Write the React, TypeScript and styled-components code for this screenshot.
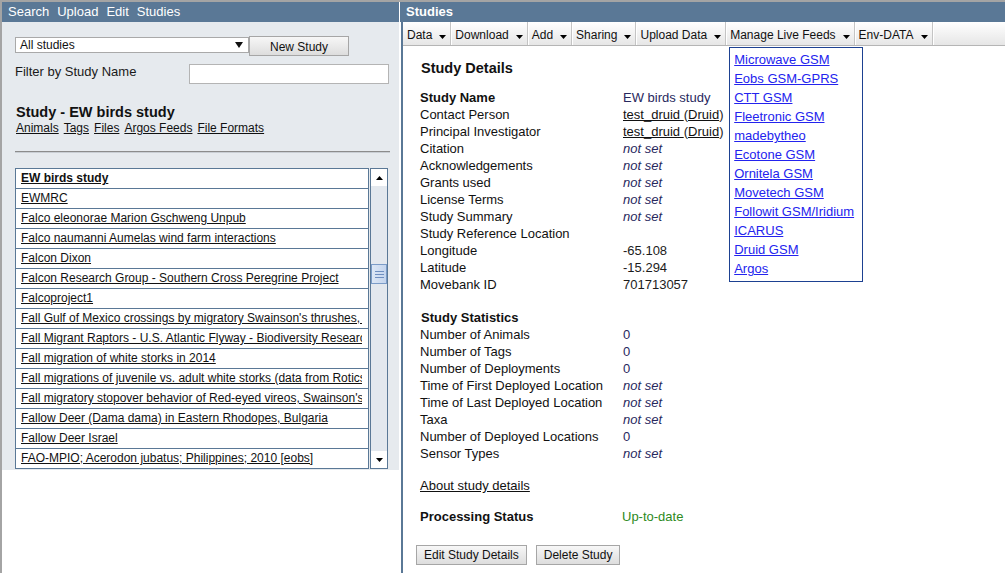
import React from 'react';
import styled, { createGlobalStyle } from 'styled-components';

const GlobalStyle = createGlobalStyle`
  html, body { margin: 0; padding: 0; background: #fff; }
  body { font-family: "Liberation Sans", Arial, Helvetica, sans-serif; font-size: 13px; color: #111; }
  * { box-sizing: border-box; }
`;

const Page = styled.div`
  width: 1005px;
  height: 573px;
  overflow: hidden;
  border-top: 2px solid #a4a4a4;
  border-left: 2px solid #a4a4a4;
  display: flex;
  align-items: flex-start;
`;

/* ---------- left panel ---------- */
const LeftPanel = styled.div`
  width: 397px;
  flex: none;
  background: #e6eaee;
  padding-bottom: 1px;
`;

const BarHeader = styled.div<{ $bold?: boolean }>`
  height: 20px;
  background: #5a7896;
  color: #fff;
  display: flex;
  align-items: center;
  gap: 8px;
  padding: 0 0 1px 6px;
  font-size: 13px;
  font-weight: ${(p) => (p.$bold ? 700 : 400)};
`;

const LeftBody = styled.div`
  padding: 14px 0 0 13px;
`;

const SelectRow = styled.div`
  display: flex;
  align-items: flex-start;
`;

const FakeSelect = styled.div`
  width: 234px;
  height: 16px;
  margin-top: 1px;
  background: #fff;
  border: 1px solid #a9a9a9;
  display: flex;
  align-items: center;
  justify-content: space-between;
  padding: 0 5px 0 4px;
  font-size: 12px;
  color: #111;
`;

const Button = styled.button<{ $w?: number }>`
  height: 20px;
  ${(p) => (p.$w ? `width: ${p.$w}px;` : 'padding: 0 7px;')}
  border: 1px solid #a6a6a6;
  border-radius: 0;
  background: linear-gradient(#f7f7f7, #dddddd);
  font-family: "Liberation Sans", Arial, sans-serif;
  font-size: 12px;
  color: #111;
  margin: 0;
  line-height: 18px;
`;

const FilterRow = styled.div`
  margin-top: 8px;
  width: 374px;
  display: flex;
  justify-content: space-between;
  align-items: flex-start;
`;

const FilterLabel = styled.span`
  font-size: 13px;
  line-height: 16px;
  color: #1a1a1a;
`;

const FilterInput = styled.div`
  width: 200px;
  height: 20px;
  background: #fff;
  border: 1px solid #b4b4b4;
`;

const StudyTitle = styled.div`
  margin-top: 20px;
  font-size: 14.5px;
  font-weight: 700;
  line-height: 17px;
  padding-left: 1px;
`;

const SubLinks = styled.div`
  display: flex;
  gap: 5px;
  font-size: 12px;
  line-height: 14px;
  padding-left: 1px;
`;

const DarkLink = styled.a`
  color: #111;
  text-decoration: underline;
`;

const Rule = styled.div`
  margin-top: 16px;
  width: 375px;
  border-top: 1px solid #8c8c8c;
  border-bottom: 1px solid #c9ced4;
`;

const ListArea = styled.div`
  margin-top: 15px;
  display: flex;
  gap: 1px;
`;

const ListTable = styled.div`
  width: 354px;
  border: 1px solid #5a7896;
  background: #fff;
`;

const ListRow = styled.div`
  box-sizing: content-box;
  height: 19px;
  line-height: 19px;
  & + & { border-top: 1px solid #5a7896; }
`;

const RowLink = styled.a<{ $bold?: boolean }>`
  display: block;
  margin: 0 6px 0 5px;
  overflow: hidden;
  white-space: nowrap;
  font-size: 12px;
  font-weight: ${(p) => (p.$bold ? 700 : 400)};
  color: #111;
  text-decoration: underline;
`;

const ScrollBar = styled.div`
  width: 18px;
  border: 1px solid #5a7896;
  background: #e3e8ee;
  display: flex;
  flex-direction: column;
`;

const ScrollBtn = styled.div`
  height: 17px;
  background: #fff;
  display: flex;
  align-items: center;
  justify-content: center;
`;

const ScrollTrack = styled.div`
  flex: 1;
  position: relative;
`;

const Thumb = styled.div`
  position: absolute;
  left: 0;
  right: 0;
  top: 78px;
  height: 20px;
  border: 1px solid #7b9cc8;
  background: linear-gradient(90deg, #dce7f5, #c4d5ee);
  display: flex;
  flex-direction: column;
  align-items: center;
  justify-content: center;
  gap: 2px;
`;

const Grip = styled.div`
  width: 9px;
  height: 1px;
  background: #6f8fc0;
`;

/* ---------- right panel ---------- */
const RightPanel = styled.div`
  flex: 1;
  margin-left: 1px;
  height: 571px;
  display: flex;
  flex-direction: column;
`;

const RightBody = styled.div`
  flex: 1;
  margin-left: 1px;
  border-left: 2px solid #5a7896;
  display: flex;
  flex-direction: column;
`;

const Toolbar = styled.div`
  height: 24px;
  background: linear-gradient(#ffffff, #e6e6e6);
  border-bottom: 1px solid #b5b5b5;
  display: flex;
  font-size: 12px;
`;

const MenuItem = styled.div`
  position: relative;
  display: flex;
  align-items: center;
  padding: 2px 4px 0;
  border-right: 1px solid #c4c4c4;
  box-shadow: 1px 0 0 #fff;
  color: #111;
  white-space: nowrap;
`;

const MenuArrow = styled.svg`
  margin-left: 7px;
  margin-top: 4px;
`;

const Dropdown = styled.div`
  position: absolute;
  top: 25px;
  left: 3px;
  width: 134px;
  background: #fff;
  border: 1px solid #1d4191;
  padding: 2px 4px 3px;
  display: flex;
  flex-direction: column;
  z-index: 10;
`;

const FeedLink = styled.a`
  font-size: 13px;
  line-height: 19px;
  color: #2323ee;
  text-decoration: underline;
`;

const Content = styled.div`
  padding-left: 17px;
`;

const SectionTitle = styled.div`
  margin-top: 14px;
  font-size: 14.5px;
  font-weight: 700;
  line-height: 17px;
  padding-left: 1px;
`;

const DetailGrid = styled.div<{ $top: number; $col?: number }>`
  margin-top: ${(p) => p.$top}px;
  display: grid;
  grid-template-columns: ${(p) => p.$col ?? 203}px 1fr;
  line-height: 17px;
  font-size: 13px;
`;

const Label = styled.div<{ $bold?: boolean }>`
  color: #111;
  font-weight: ${(p) => (p.$bold ? 700 : 400)};
  white-space: nowrap;
`;

const Value = styled.div<{ $tone?: 'navy' | 'dark' | 'green'; $italic?: boolean }>`
  white-space: nowrap;
  font-style: ${(p) => (p.$italic ? 'italic' : 'normal')};
  color: ${(p) => (p.$tone === 'green' ? '#2e8a1c' : p.$tone === 'dark' ? '#1c1c1c' : '#28285e')};
`;

const GroupHead = styled.div`
  grid-column: 1 / span 2;
  font-weight: 700;
  padding-left: 1px;
`;

const AboutLink = styled.a`
  margin-top: 15px;
  display: inline-block;
  line-height: 17px;
  font-size: 13px;
  color: #111;
  text-decoration: underline;
`;

const ButtonRow = styled.div`
  margin-top: 20px;
  margin-left: -4px;
  display: flex;
  gap: 9px;
`;

const Tri = ({ up }: { up?: boolean }) => (
  <svg width="7" height="4" viewBox="0 0 7 4">
    <path d={up ? 'M0 4h7L3.5 0z' : 'M0 0h7L3.5 4z'} fill="#000" />
  </svg>
);

const studies = [
  'EW birds study',
  'EWMRC',
  'Falco eleonorae Marion Gschweng Unpub',
  'Falco naumanni Aumelas wind farm interactions',
  'Falcon Dixon',
  'Falcon Research Group - Southern Cross Peregrine Project',
  'Falcoproject1',
  "Fall Gulf of Mexico crossings by migratory Swainson's thrushes, 2013",
  'Fall Migrant Raptors - U.S. Atlantic Flyway - Biodiversity Research Institute',
  'Fall migration of white storks in 2014',
  'Fall migrations of juvenile vs. adult white storks (data from Rotics et al. 2016)',
  "Fall migratory stopover behavior of Red-eyed vireos, Swainson's thrushes",
  'Fallow Deer (Dama dama) in Eastern Rhodopes, Bulgaria',
  'Fallow Deer Israel',
  'FAO-MPIO; Acerodon jubatus; Philippines; 2010 [eobs]',
];

const menus = ['Data', 'Download', 'Add', 'Sharing', 'Upload Data', 'Manage Live Feeds', 'Env-DATA'];

const feeds = [
  'Microwave GSM',
  'Eobs GSM-GPRS',
  'CTT GSM',
  'Fleetronic GSM',
  'madebytheo',
  'Ecotone GSM',
  'Ornitela GSM',
  'Movetech GSM',
  'Followit GSM/Iridium',
  'ICARUS',
  'Druid GSM',
  'Argos',
];

type Row = { label: string; value?: string; tone?: 'navy' | 'dark'; italic?: boolean; bold?: boolean; person?: boolean };

const details: Row[] = [
  { label: 'Study Name', value: 'EW birds study', bold: true },
  { label: 'Contact Person', person: true },
  { label: 'Principal Investigator', person: true },
  { label: 'Citation', value: 'not set', italic: true },
  { label: 'Acknowledgements', value: 'not set', italic: true },
  { label: 'Grants used', value: 'not set', italic: true },
  { label: 'License Terms', value: 'not set', italic: true },
  { label: 'Study Summary', value: 'not set', italic: true },
  { label: 'Study Reference Location', value: '' },
  { label: 'Longitude', value: '-65.108', tone: 'dark' },
  { label: 'Latitude', value: '-15.294', tone: 'dark' },
  { label: 'Movebank ID', value: '701713057', tone: 'dark' },
];

const stats: Row[] = [
  { label: 'Number of Animals', value: '0' },
  { label: 'Number of Tags', value: '0' },
  { label: 'Number of Deployments', value: '0' },
  { label: 'Time of First Deployed Location', value: 'not set', italic: true },
  { label: 'Time of Last Deployed Location', value: 'not set', italic: true },
  { label: 'Taxa', value: 'not set', italic: true },
  { label: 'Number of Deployed Locations', value: '0' },
  { label: 'Sensor Types', value: 'not set', italic: true },
];

const renderRows = (rows: Row[]) =>
  rows.map((r) => (
    <React.Fragment key={r.label}>
      <Label $bold={r.bold}>{r.label}</Label>
      {r.person ? (
        <Value $tone="dark">
          <DarkLink href="#">test_druid </DarkLink>(<DarkLink href="#">Druid</DarkLink>)
        </Value>
      ) : (
        <Value $tone={r.tone} $italic={r.italic}>
          {r.value}
        </Value>
      )}
    </React.Fragment>
  ));

export default function App() {
  return (
    <>
      <GlobalStyle />
      <Page>
        <LeftPanel>
          <BarHeader>
            <span>Search</span>
            <span>Upload</span>
            <span>Edit</span>
            <span>Studies</span>
          </BarHeader>
          <LeftBody>
            <SelectRow>
              <FakeSelect>
                <span>All studies</span>
                <svg width="8" height="6" viewBox="0 0 8 6">
                  <path d="M0 0h8L4 6z" fill="#111" />
                </svg>
              </FakeSelect>
              <Button $w={100}>New Study</Button>
            </SelectRow>
            <FilterRow>
              <FilterLabel>Filter by Study Name</FilterLabel>
              <FilterInput />
            </FilterRow>
            <StudyTitle>Study - EW birds study</StudyTitle>
            <SubLinks>
              <DarkLink href="#">Animals</DarkLink>
              <DarkLink href="#">Tags</DarkLink>
              <DarkLink href="#">Files</DarkLink>
              <DarkLink href="#">Argos Feeds</DarkLink>
              <DarkLink href="#">File Formats</DarkLink>
            </SubLinks>
            <Rule />
            <ListArea>
              <ListTable>
                {studies.map((s, i) => (
                  <ListRow key={s}>
                    <RowLink href="#" $bold={i === 0}>
                      {s}
                    </RowLink>
                  </ListRow>
                ))}
              </ListTable>
              <ScrollBar>
                <ScrollBtn>
                  <Tri up />
                </ScrollBtn>
                <ScrollTrack>
                  <Thumb>
                    <Grip />
                    <Grip />
                    <Grip />
                  </Thumb>
                </ScrollTrack>
                <ScrollBtn>
                  <Tri />
                </ScrollBtn>
              </ScrollBar>
            </ListArea>
          </LeftBody>
        </LeftPanel>

        <RightPanel>
          <BarHeader $bold>Studies</BarHeader>
          <RightBody>
            <Toolbar>
              {menus.map((m) => (
                <MenuItem key={m}>
                  <span>{m}</span>
                  <MenuArrow width="7" height="4" viewBox="0 0 7 4">
                    <path d="M0 0h7L3.5 4z" fill="#000" />
                  </MenuArrow>
                  {m === 'Manage Live Feeds' && (
                    <Dropdown>
                      {feeds.map((f) => (
                        <FeedLink href="#" key={f}>
                          {f}
                        </FeedLink>
                      ))}
                    </Dropdown>
                  )}
                </MenuItem>
              ))}
            </Toolbar>
            <Content>
              <SectionTitle>Study Details</SectionTitle>
              <DetailGrid $top={12}>{renderRows(details)}</DetailGrid>
              <DetailGrid $top={16}>
                <GroupHead>Study Statistics</GroupHead>
                {renderRows(stats)}
              </DetailGrid>
              <AboutLink href="#">About study details</AboutLink>
              <DetailGrid $top={14} $col={202}>
                <Label $bold>Processing Status</Label>
                <Value $tone="green">Up-to-date</Value>
              </DetailGrid>
              <ButtonRow>
                <Button>Edit Study Details</Button>
                <Button>Delete Study</Button>
              </ButtonRow>
            </Content>
          </RightBody>
        </RightPanel>
      </Page>
    </>
  );
}
